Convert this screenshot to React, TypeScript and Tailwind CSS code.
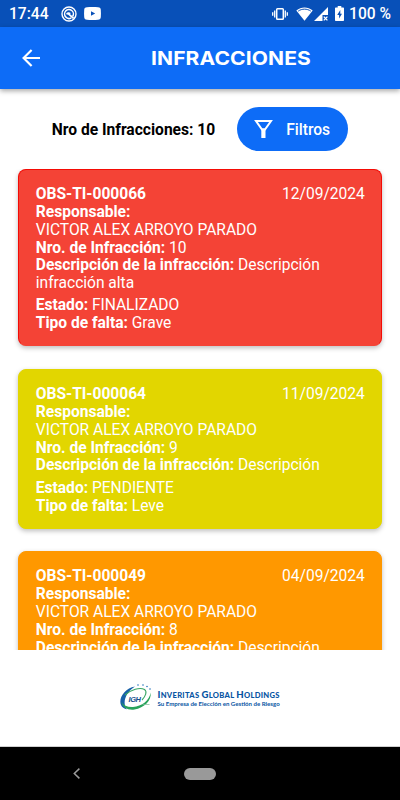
import clsx from 'clsx'

type Infraction = {
  code: string
  date: string
  owner: string
  number: number
  description: string
  status: string
  fault: string
  color: string
}

const infractions: Infraction[] = [
  {
    code: 'OBS-TI-000066',
    date: '12/09/2024',
    owner: 'VICTOR ALEX ARROYO PARADO',
    number: 10,
    description: 'Descripción infracción alta',
    status: 'FINALIZADO',
    fault: 'Grave',
    color: 'bg-[#f44336] border-[#f40b05] border-b-[#f44336]',
  },
  {
    code: 'OBS-TI-000064',
    date: '11/09/2024',
    owner: 'VICTOR ALEX ARROYO PARADO',
    number: 9,
    description: 'Descripción',
    status: 'PENDIENTE',
    fault: 'Leve',
    color: 'bg-[#e2d600] border-[#e2d600]',
  },
  {
    code: 'OBS-TI-000049',
    date: '04/09/2024',
    owner: 'VICTOR ALEX ARROYO PARADO',
    number: 8,
    description: 'Descripción',
    status: 'PENDIENTE',
    fault: 'Leve',
    color: 'bg-[#ff9800] border-[#ff9800]',
  },
]

function StatusBar() {
  return (
    <div className="flex h-[27px] shrink-0 items-center bg-[#0850b8] px-[9px] text-[15.6px] font-medium text-white">
      <span className="w-[52px] whitespace-nowrap pt-[2px]">17:44</span>
      <svg className="h-4 w-4" viewBox="0 0 16 16" fill="none" stroke="currentColor">
        <circle cx="8" cy="8" r="7" strokeWidth="1.4" />
        <path d="M4.900 11.100A4.400 4.400 0 1 1 11.600 10.500M4.600 10.800C6 12.500 8.500 12.900 10.300 12" strokeWidth="1.5" />
        <path d="M5.700 8.300c.8-1.500 2.300-1.500 3.500-.5M6.300 6.900l6.300 5.500" strokeWidth="1.8" />
      </svg>
      <svg className="ml-[7px] h-[13px] w-[17px]" viewBox="0 0 17 13" fill="currentColor">
        <path fillRule="evenodd" d="M3 .3C6 0 11 0 14 .3c2 .2 2.700 1 2.800 2.700.2 2.500.2 4.500 0 7-.1 1.700-.8 2.500-2.800 2.700-3 .3-8 .3-11 0C1 12.500.3 11.700.2 10c-.2-2.500-.2-4.500 0-7C.3 1.300 1 .500 3 .3Zm4 3.900v4.600l4.200-2.300L7 4.200Z" />
      </svg>
      {/* Right side indicators */}
      <svg className="ml-auto h-[12px] w-[16px]" viewBox="0 0 16 12" fill="none" stroke="currentColor" strokeWidth="1.3">
        <rect x="4.700" y=".8" width="6.600" height="10.400" rx=".8" strokeWidth="1.5" />
        <path d="M2.700 2.500v7M.7 4.200v3.600M13.300 2.500v7M15.300 4.200v3.600" />
      </svg>
      <svg className="ml-2 h-[14px] w-[17px]" viewBox="0 0 17 14" fill="currentColor">
        <path d="M.3 3.500C5.200-.6 11.800-.6 16.700 3.500L8.500 13.700Z" />
        <path d="M2.200 4.100c3.900-2.600 8.700-2.600 12.600 0" fill="none" stroke="#0850b8" />
      </svg>
      <svg className="ml-px h-[14px] w-[14px]" viewBox="0 0 14 14" fill="currentColor">
        <path d="M14 0v8H8.500v6H0Z" />
        <path d="m9.800 9.600 3.600 3.800m0-3.800-3.600 3.800" stroke="currentColor" strokeWidth="1.300" />
      </svg>
      <svg className="ml-[7px] h-[15px] w-[9px]" viewBox="0 0 9 15" fill="currentColor">
        <path d="M2.700 0h3.600v1.500H8c.6 0 1 .4 1 1V14c0 .6-.4 1-1 1H1c-.6 0-1-.4-1-1V2.500c0-.6.4-1 1-1h1.700Z" />
        <path d="M5.300 4 2.200 9h1.900v3.400L7 7.700H5.300Z" fill="#0850b8" />
      </svg>
      <span className="ml-[5px] whitespace-nowrap pt-[2px]">100 %</span>
    </div>
  )
}

function Header() {
  return (
    <header className="relative z-10 flex h-[62px] shrink-0 items-center bg-[#0d6cf7] pl-[22px] text-white shadow-[0_2px_5px_rgba(0,0,0,0.35)]">
      <svg className="h-[18px] w-[18px]" viewBox="0 0 18 18" fill="none" stroke="currentColor" strokeWidth="2.2">
        <path d="M18 9H1.700M9.600 1 1.600 9l8 8" />
      </svg>
      <h1 className="ml-[111px] origin-left scale-x-[1.09] whitespace-nowrap font-['Inter'] text-[19.3px] font-bold tracking-[0.1px]">INFRACCIONES</h1>
    </header>
  )
}

function Toolbar() {
  return (
    <div className="flex h-[80px] shrink-0 items-center justify-center gap-[22px]">
      <span className="whitespace-nowrap pt-[3px] text-[15.6px] font-bold text-black">Nro de Infracciones: 10</span>
      <button className="flex h-11 w-[111px] items-center rounded-full bg-[#0d6cf7] pl-[17px] text-[15.6px] font-medium text-white">
        <svg className="mr-[13px] h-[18px] w-[19px]" viewBox="0 0 19 18" fill="none" stroke="currentColor" strokeWidth="2">
          <path d="M2 1h15l-6 8.500H8Z" />
          <path d="M7.300 8.500h4.200V18H7.300Z" fill="currentColor" stroke="none" />
        </svg>
        <span className="pt-[3px]">Filtros</span>
      </button>
    </div>
  )
}

function Field({ label, value }: { label: string; value: string | number }) {
  return (
    <p>
      <b>{label}</b> {value}
    </p>
  )
}

function InfractionCard({ item }: { item: Infraction }) {
  return (
    <article
      className={clsx(
        'shrink-0 rounded-[8px] border pb-[12.2px] pl-[16.8px] pr-[16.2px] pt-[16.2px] text-[15.6px] leading-[17.8px] tracking-[-0.02px] text-white shadow-[0_2px_5px_rgba(0,0,0,0.26)]',
        item.color,
      )}
    >
      <div className="flex justify-between">
        <b>{item.code}</b>
        <span>{item.date}</span>
      </div>
      <p className="font-bold">Responsable:</p>
      <p>{item.owner}</p>
      <Field label="Nro. de Infracción:" value={item.number} />
      <Field label="Descripción de la infracción:" value={item.description} />
      <div className="mt-[4.5px]">
        <Field label="Estado:" value={item.status} />
        <Field label="Tipo de falta:" value={item.fault} />
      </div>
    </article>
  )
}

function Footer() {
  return (
    <footer className="flex h-[97px] shrink-0 items-center justify-center gap-[5px] border-b border-[#d0d0d0] bg-white">
      <svg className="h-[30px] w-[33px]" viewBox="0 0 33 30" fill="none">
        <path d="M15 3.500C5 5-1.500 15 .8 21.500c1 2.800 3.400 4.500 6.200 4.700C2 21 5 9.500 15 3.500Z" fill="#1760a8" />
        <path d="M1.500 19c1 5.500 6.500 8.500 13 7.500C24 25 32 17.500 30.500 9.500 30 17 21.500 23.500 13 24 7.500 24.300 3.500 22.500 1.500 19Z" fill="#28a35a" />
        <path d="M5 12c6-5.500 15-8 19.500-5.500 3 2 1 7-2.500 10.500" stroke="#39a765" strokeWidth="1.1" />
        <g fill="#2874bd">
          <circle cx="18" cy="2" r=".8" />
          <circle cx="23" cy="2" r=".8" />
          <circle cx="27" cy="3.500" r=".8" />
          <circle cx="30" cy="6" r=".8" />
        </g>
        <text x="8.500" y="18.800" fill="#164f8d" fontFamily="Liberation Sans" fontSize="7.500" fontWeight="bold" fontStyle="italic" textLength="12.500">IGH</text>
        <path d="M22.500 21.500h7" stroke="#7cba98" strokeWidth=".7" />
      </svg>
      <div className="w-[123px] whitespace-nowrap pt-px font-['Lato'] font-bold text-[#0755a3]">
        <p className="text-[7.6px] font-black leading-[9px] tracking-[0.29px]">
          <span className="text-[9.6px]">I</span>NVERITAS <span className="text-[9.6px]">G</span>LOBAL <span className="text-[9.6px]">H</span>OLDINGS
        </p>
        <p className="text-[6.1px] leading-[7px]">Su Empresa de Elección en Gestión de Riesgo</p>
      </div>
    </footer>
  )
}

export default function App() {
  return (
    <div className="flex h-[800px] w-[400px] flex-col overflow-hidden bg-white font-['Roboto',sans-serif]">
      <StatusBar />
      <Header />
      <Toolbar />
      <main className="flex min-h-0 flex-1 flex-col gap-[22.8px] overflow-hidden px-[18px]">
        {infractions.map((item) => (
          <InfractionCard key={item.code} item={item} />
        ))}
      </main>
      <Footer />
      {/* System navigation */}
      <nav className="grid h-[53px] shrink-0 grid-cols-[1fr_32px_1fr] items-center bg-black">
        <svg className="ml-[73px] h-[11px] w-[7px]" viewBox="0 0 7 11" fill="none" stroke="#9a9a9a" strokeWidth="1.5">
          <path d="M6.400.6 1.300 5.500l5.100 4.900" />
        </svg>
        <div className="h-3 rounded-full bg-[#999999]" />
      </nav>
    </div>
  )
}
